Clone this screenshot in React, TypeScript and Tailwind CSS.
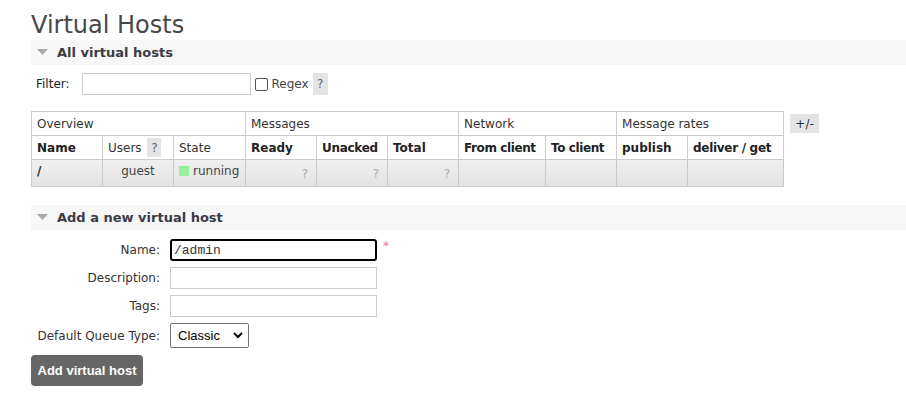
import React from 'react';

const font = { fontFamily: '"DejaVu Sans", Verdana, sans-serif' };

const Help = ({ className = '' }: { className?: string }) => (
  <span className={`inline-flex items-center justify-center bg-[#e4e4e4] text-[#666] ${className}`}>?</span>
);

const SectionBar = ({ title }: { title: string }) => (
  <div className="flex h-[25px] items-center bg-[#f7f7f7] pl-[6px]">
    <svg width="11" height="7" viewBox="0 0 11 7" className="mr-[9px]">
      <path d="M0 0 L11 0 L5.5 6 Z" fill="#aaaaaa" />
    </svg>
    <span className="text-[13px] font-bold text-[#3b3b48]">{title}</span>
  </div>
);

const App: React.FC = () => {
  const cell = 'border border-[#cccccc] px-[5px] align-middle whitespace-nowrap overflow-hidden';
  const th = `${cell} text-left`;
  return (
    <div className="min-h-[401px] bg-white pl-[31px] text-[12px] text-[#333]" style={font}>
      <h1 className="pt-[10px] text-[24px] leading-[30px] font-normal text-[#484848]">Virtual Hosts</h1>

      {/* All virtual hosts */}
      <SectionBar title="All virtual hosts" />
      <div className="mt-[8px] flex items-center pl-[5px]">
        <span className="mr-[12px] text-[12px] text-[#222]">Filter:</span>
        <input className="h-[22px] w-[169px] border border-[#cccccc] outline-none" />
        <span className="ml-[4px] inline-block h-[13px] w-[13px] rounded-[2px] border border-[#555]" />
        <span className="ml-[4px] text-[12px] text-[#444]">Regex</span>
        <Help className="ml-[4px] h-[22px] w-[15px] text-[12px]" />
      </div>

      <div className="mt-[16px] flex items-start">
        <table className="w-[752px] border-collapse text-[12px] text-[#222]" style={{ tableLayout: 'fixed' }}>
          <colgroup>
            <col style={{ width: 71 }} />
            <col style={{ width: 71 }} />
            <col style={{ width: 72 }} />
            <col style={{ width: 71 }} />
            <col style={{ width: 71 }} />
            <col style={{ width: 71 }} />
            <col style={{ width: 87 }} />
            <col style={{ width: 71 }} />
            <col style={{ width: 71 }} />
            <col style={{ width: 96 }} />
          </colgroup>
          <thead>
            <tr className="h-[24px]">
              <th colSpan={3} className={`${th} font-normal text-[#333]`}>Overview</th>
              <th colSpan={3} className={`${th} font-normal text-[#333]`}>Messages</th>
              <th colSpan={2} className={`${th} font-normal text-[#333]`}>Network</th>
              <th colSpan={2} className={`${th} font-normal text-[#333]`}>Message rates</th>
            </tr>
            <tr className="h-[24px]">
              <th className={`${th} font-bold`}>Name</th>
              <th className={`${th} font-normal text-[#333]`}>
                Users <Help className="ml-[2px] h-[19px] w-[14px]" />
              </th>
              <th className={`${th} font-normal text-[#333]`}>State</th>
              <th className={`${th} font-bold`}>Ready</th>
              <th className={`${th} font-bold tracking-[-0.3px]`}>Unacked</th>
              <th className={`${th} font-bold`}>Total</th>
              <th className={`${th} font-bold tracking-[-0.4px]`}>From client</th>
              <th className={`${th} font-bold tracking-[-0.4px]`}>To client</th>
              <th className={`${th} font-bold`}>publish</th>
              <th className={`${th} font-bold tracking-[-0.3px]`}>deliver / get</th>
            </tr>
          </thead>
          <tbody>
            <tr className="h-[27px] bg-gradient-to-b from-[#f0f0f0] to-[#e2e2e2]">
              <td className={`${cell} pb-[4px] text-left font-bold`}>/</td>
              <td className={`${cell} pb-[4px] text-center text-[#444]`}>guest</td>
              <td className={`${cell} pb-[4px] text-left text-[#444]`}>
                <span className="mr-[4px] inline-block h-[10px] w-[10px] bg-[#99ee99] align-[-1px]" />
                running
              </td>
              <td className={`${cell} pt-[2px] pr-[8px] text-right text-[#aaa]`}>?</td>
              <td className={`${cell} pt-[2px] pr-[8px] text-right text-[#aaa]`}>?</td>
              <td className={`${cell} pt-[2px] pr-[8px] text-right text-[#aaa]`}>?</td>
              <td className={cell} />
              <td className={cell} />
              <td className={cell} />
              <td className={cell} />
            </tr>
          </tbody>
        </table>
        <span className="ml-[6px] mt-[3px] inline-flex h-[19px] w-[29px] items-center justify-center bg-[#e4e4e4] text-[12px] text-[#333]">+/-</span>
      </div>

      {/* Add a new virtual host */}
      <div className="mt-[18px]">
        <SectionBar title="Add a new virtual host" />
      </div>
      <div className="mt-[9px] grid grid-cols-[129px_auto] items-center gap-x-[10px] gap-y-[6px] text-[12px] text-[#333]">
        <label className="text-right">Name:</label>
        <div className="flex items-start">
          <input
            defaultValue="/admin"
            className="h-[22px] w-[207px] rounded-[3px] border-2 border-black px-[2px] text-[13px] outline-none"
            style={{ fontFamily: '"Liberation Mono", monospace' }}
          />
          <span className="ml-[6px] mt-[-2px] text-[12px] text-[#f08080]">*</span>
        </div>
        <label className="text-right">Description:</label>
        <input className="h-[22px] w-[207px] border border-[#cccccc] outline-none" />
        <label className="text-right">Tags:</label>
        <input className="h-[22px] w-[207px] border border-[#cccccc] outline-none" />
        <label className="text-right">Default Queue Type:</label>
        <div>
          <div
            className="inline-flex h-[25px] w-[79px] items-center justify-between rounded-[2px] border border-[#767676] pl-[7px] pr-[5px] text-[13px] text-black"
            style={{ fontFamily: '"Liberation Sans", Arial, sans-serif' }}
          >
            Classic
            <svg width="10" height="7" viewBox="0 0 10 7">
              <path d="M1 1 L5 5 L9 1" stroke="#000" strokeWidth="2" fill="none" />
            </svg>
          </div>
        </div>
      </div>
      <button
        className="mt-[7px] h-[31px] w-[112px] rounded-[4px] bg-[#666] text-[13px] font-bold text-white"
        style={{ fontFamily: '"Liberation Sans", Arial, sans-serif' }}
      >
        Add virtual host
      </button>
    </div>
  );
};

export default App;
